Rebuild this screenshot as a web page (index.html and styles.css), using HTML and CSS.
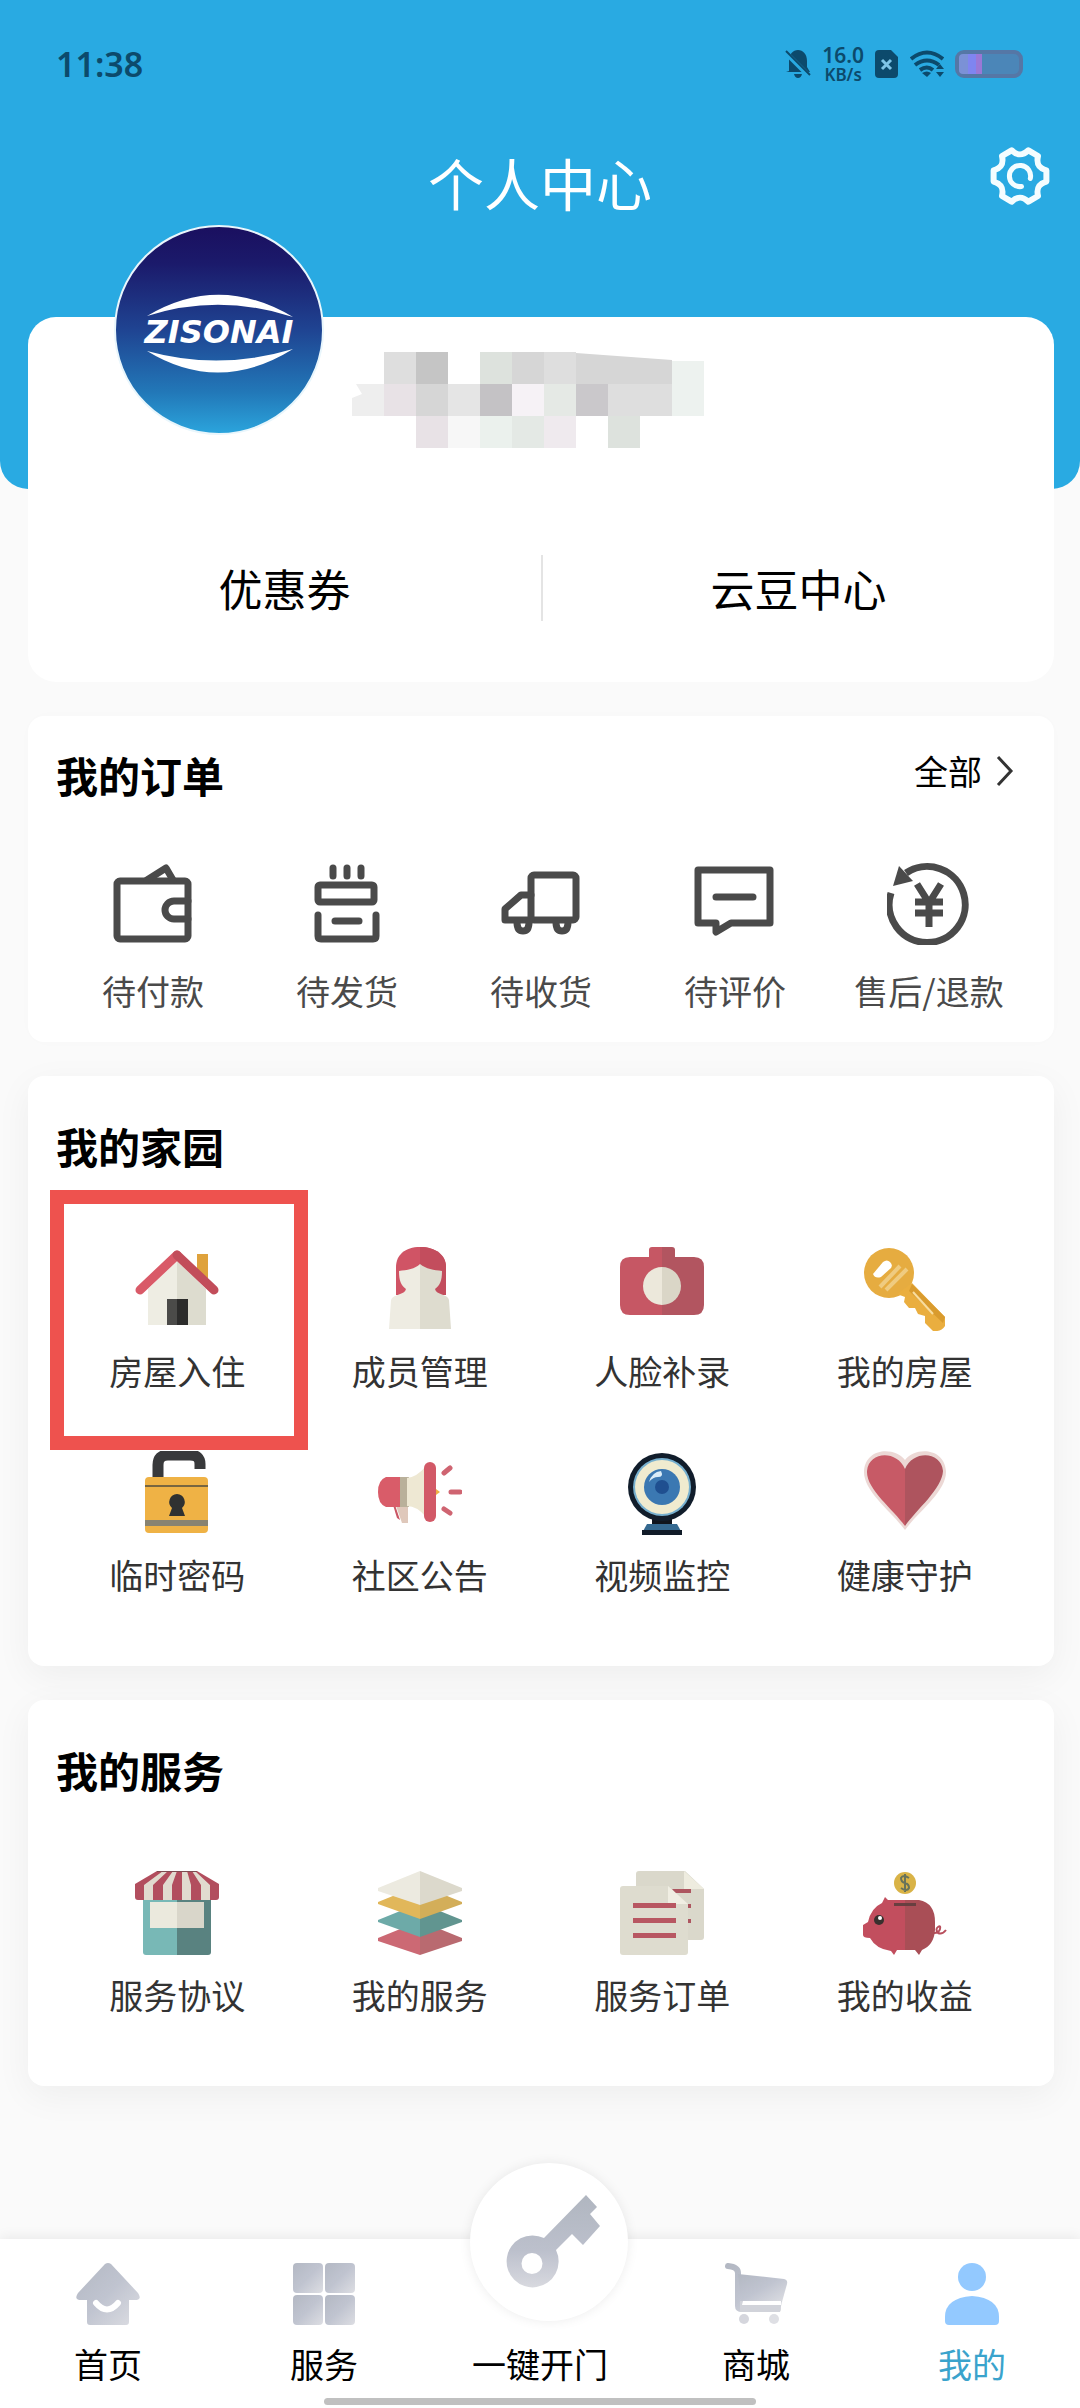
FILE: index.html
```html
<!DOCTYPE html>
<html lang="zh-CN">
<head>
<meta charset="utf-8">
<meta name="viewport" content="width=device-width, initial-scale=1">
<title>个人中心</title>
<link rel="stylesheet" href="styles.css">
</head>
<body>
<div class="page">
  <header class="header">
    <div class="status">
      <time class="clock">11:38</time>
      <div class="status-icons">
        <svg width="26" height="30" viewBox="0 0 26 30"><path d="M4 22V12C4 5 8 1 13 1s9 4 9 11v6l3 5H1zM9 25h8q-1 4-4 4t-4-4z" fill="#0c4a6c"/><path d="M0 3l25 25" stroke="#29aae2" stroke-width="5"/><path d="M1 2l24 24" stroke="#0c4a6c" stroke-width="2"/></svg>
        <div class="speed"><span class="speed-value">16.0</span><span class="speed-unit">KB/s</span></div>
        <svg width="24" height="28" viewBox="0 0 24 28"><path d="M4 0h12l7 7v17q0 4-4 4H4q-4 0-4-4V4q0-4 4-4z" fill="#0c4a6c"/><path d="M7 10l9 9M16 10l-9 9" stroke="#7fc4e6" stroke-width="3"/></svg>
        <svg width="34" height="28" viewBox="0 0 34 28"><g fill="none" stroke="#0c4a6c" stroke-width="4"><path d="M1 9q16-13 32 0"/><path d="M5 15q12-9 24 0"/><path d="M10 20q7-5 13 0"/></g><path d="M12 23q5-3 9 0l-4 4z" fill="#0c4a6c"/><path d="M30 14l4 5h-8zM30 27l4-5h-8z" fill="#0c4a6c"/></svg>
        <svg width="68" height="28" viewBox="0 0 68 28"><rect x="2" y="2" width="64" height="24" rx="7" fill="#4b86b8" stroke="#5577a6" stroke-width="4"/><path d="M8 4h5v20H8q-4 0-4-4V8q0-4 4-4z" fill="#7b91d6"/><path d="M13 4h8v20h-8z" fill="#7f85f0"/><path d="M21 4h6v20h-6z" fill="#9a78d6"/></svg>
      </div>
    </div>
    <div class="titlebar">
      <h1 class="title">个人中心</h1>
      <button class="settings" type="button" aria-label="设置">
        <svg width="64" height="64" viewBox="-32 -32 64 64" fill="none" stroke="#f4fdff" stroke-width="6" stroke-linecap="round" stroke-linejoin="round"><path d="M26.4-5.6V5.6C18.5 8 16.2 12 18 20L8.400 25.700C2.300 20-2.300 20-8.400 25.700L-18 20C-16.200 12-18.500 8-26.400 5.600V-5.600C-18.500-8-16.200-12-18-20L-8.400-25.700C-2.300-20 2.300-20 8.400-25.700L18-20C16.200-12 18.500-8 26.400-5.600Z"/><path d="M10.300 2.500A10.600 10.600 0 1 0 1.500 10.500" stroke-width="5"/></svg>
      </button>
    </div>
  </header>

  <main class="main">
    <section class="card profile">
      <div class="who">
        <svg class="avatar" width="210" height="210" viewBox="0 0 210 210">
          <defs><linearGradient id="sky" x1="0" y1="0" x2="0" y2="1"><stop offset="0" stop-color="#1a0f5f"/><stop offset=".18" stop-color="#1b1a6b"/><stop offset=".5" stop-color="#1f4492"/><stop offset=".8" stop-color="#2278b8"/><stop offset="1" stop-color="#2ba5dd"/></linearGradient></defs>
          <circle cx="105" cy="105" r="104" fill="url(#sky)" stroke="#e9f6fc" stroke-width="2"/>
          <path d="M33 91Q105 48 179 92Q105 68 33 91ZM33 126Q105 146 179 124Q105 170 33 126Z" fill="#fff"/>
          <text x="105" y="118" text-anchor="middle" class="brand">ZISONAI</text>
        </svg>
        <svg class="mask" width="352" height="96" viewBox="0 0 352 96" aria-hidden="true">
          <path d="M32 0h32v32H32z" fill="#dedede"/><path d="M64 0h32v32H64z" fill="#c5c5c5"/><path d="M128 0h32v32h-32z" fill="#dde2dd"/><path d="M160 0h32v32h-32z" fill="#d6d6d6"/><path d="M192 0h32v32h-32z" fill="#dedede"/><path d="M224 1l96 7v24h-96z" fill="#d6d6d6"/><path d="M320 9h32v55h-32z" fill="#edf2ef"/>
          <path d="M4 32h28v32H0V46l10-4z" fill="#eee"/><path d="M32 32h32v32H32z" fill="#e8e2e6"/><path d="M64 32h32v32H64z" fill="#d6d6d6"/><path d="M96 32h32v32H96z" fill="#e5e5e5"/><path d="M128 32h32v32h-32z" fill="#c4c2c5"/><path d="M160 32h32v32h-32z" fill="#f6f2f6"/><path d="M192 32h32v32h-32z" fill="#e5e9e5"/><path d="M224 32h32v32h-32z" fill="#cac8cb"/><path d="M256 32h64v32h-64z" fill="#dedede"/>
          <path d="M64 64h32v32H64z" fill="#e8e2e6"/><path d="M96 64h32v32H96z" fill="#f7f7f7"/><path d="M128 64h32v32h-32z" fill="#ebf1ed"/><path d="M160 64h32v32h-32z" fill="#e4e9e5"/><path d="M192 64h32v32h-32z" fill="#efeaee"/><path d="M256 64h32v32h-32z" fill="#dde2dd"/>
        </svg>
      </div>
      <div class="links">
        <a class="link" href="#coupon">优惠券</a>
        <a class="link" href="#beans">云豆中心</a>
      </div>
    </section>

    <section class="card orders">
      <div class="card-head">
        <h2 class="card-title">我的订单</h2>
        <a class="all" href="#orders">全部<svg width="18" height="32" viewBox="0 0 18 32" fill="none" stroke="#333" stroke-width="3"><path d="M2 2l13 14L2 30"/></svg></a>
      </div>
      <nav class="grid five">
        <a class="item" href="#pay"><svg class="icon line" viewBox="0 0 84 84"><rect x="6" y="20" width="71" height="58" rx="3"/><path d="M36 19L55 7L62 19M77 40H63a9 9 0 0 0 0 18h14"/></svg><span>待付款</span></a>
        <a class="item" href="#ship"><svg class="icon line" viewBox="0 0 84 84"><path d="M28 7v8M42 7v8M56 7v8M13 54v21q0 3 3 3h52q3 0 3-3V54M30 60h24"/><rect x="13" y="24" width="56" height="17" rx="2"/></svg><span>待发货</span></a>
        <a class="item" href="#receive"><svg class="icon line" viewBox="0 0 84 84"><rect x="32" y="14" width="45" height="45" rx="3"/><path d="M32 34H22L6 48V59H32"/><path d="M18 61q0 9 6 9t6-9M57 61q0 9 6 9t6-9"/></svg><span>待收货</span></a>
        <a class="item" href="#review"><svg class="icon line" viewBox="0 0 84 84"><path d="M5 9H77V62H38L23 71V62H5ZM23 36h37"/></svg><span>待评价</span></a>
        <a class="item" href="#refund"><svg class="icon line" viewBox="0 0 84 84"><path d="M4 32A38 38 0 1 0 19 12" stroke-linecap="butt"/><path d="M12 5l14 15-20 5z" fill="#4a4a4a" stroke="none"/><path d="M30 23l12 19 12-19M42 42v24M28 41h28M28 52h28" stroke-linecap="butt"/></svg><span>售后/退款</span></a>
      </nav>
    </section>

    <section class="card">
      <h2 class="card-title">我的家园</h2>
      <nav class="grid four">
        <a class="item marked" href="#checkin"><svg class="icon" viewBox="0 0 84 84"><path d="M62 7h11v26L62 23z" fill="#dfa23c"/><path d="M42 14L13 42v36h29z" fill="#eeede3"/><path d="M42 14l29 28v36H42z" fill="#dddccf"/><path d="M32 52h10v26H32z" fill="#4b4b49"/><path d="M42 52h11v26H42z" fill="#2c2c2b"/><path d="M5 43L42 8" stroke="#d95a68" stroke-width="9" stroke-linecap="round"/><path d="M42 8l37 35" stroke="#c24d5a" stroke-width="9" stroke-linecap="round"/></svg><span>房屋入住</span></a>
        <a class="item" href="#member"><svg class="icon" viewBox="0 0 84 84"><path d="M18 48V20C18 8 27 0 42 0s26 8 26 20v28z" fill="#d05465"/><path d="M42 0c16 0 26 8 26 20v28H42z" fill="#c34d5d"/><path d="M42 17C37 22 29 23 21 24c0 10 2 14 7 18-1 6-13 5-15 11l-2 29h31z" fill="#eeece2"/><path d="M42 17c6 5 14 6 22 7 0 10-2 14-7 18 1 6 13 5 14 11l2 29H42z" fill="#dedccf"/></svg><span>成员管理</span></a>
        <a class="item" href="#face"><svg class="icon" viewBox="0 0 84 84"><path d="M29 10V3q0-3 3-3h10v68H10Q0 68 0 58V20Q0 10 10 10z" fill="#c65764"/><path d="M42 0h10q3 0 3 3v7h19q10 0 10 10v38q0 10-10 10H42z" fill="#b25560"/><path d="M42 20a19 19 0 0 0 0 38z" fill="#ece8db"/><path d="M42 20a19 19 0 0 1 0 38z" fill="#dad6c7"/></svg><span>人脸补录</span></a>
        <a class="item" href="#house"><svg class="icon" viewBox="0 0 84 84"><circle cx="26" cy="26" r="25" fill="#e6ac40"/><path d="M49 36L82 70v9q-4 6-12 5l-8-8v-7l-7-2-3-6h-6l-5-6 1-5-8-3z" fill="#eaae3f"/><path d="M49 37l33 33-2 6-34-32z" fill="#d99b2e"/><path d="M10 27l10-12q4-3 7 0t1 6L18 30q-6 2-8-3z" fill="#fff"/><path d="M17 40l20-21M23 43l21-21" stroke="#efcb80" stroke-width="4"/><path d="M50 45l20 22" stroke="#f8dda0" stroke-width="2"/></svg><span>我的房屋</span></a>
        <a class="item" href="#password"><svg class="icon" viewBox="0 0 84 84"><path d="M23 27V14Q23 4 33 4h22q10 0 10 9v5" fill="none" stroke="#38393b" stroke-width="11"/><rect x="10" y="26" width="63" height="56" rx="4" fill="#efb245"/><path d="M10 35h63" stroke="#776540" stroke-width="2"/><path d="M10 69h63v6H10z" fill="#888371"/><path d="M42 43a8 8 0 0 0-5 14l-3 8h16l-3-8a8 8 0 0 0-5-14z" fill="#2f3131"/></svg><span>临时密码</span></a>
        <a class="item" href="#notice"><svg class="icon" viewBox="0 0 84 84"><path d="M17 52h13v20h-6z" fill="#dfc8bb"/><path d="M17 54l5 15-3-2-4-13z" fill="#ca5765"/><path d="M23 26H8q-8 3-8 15t8 15h15z" fill="#d95c69"/><path d="M22 26h9v30h-9z" fill="#b9b09a"/><path d="M29 27q10-1 19-12v51q-9-11-19-11z" fill="#eee8d3"/><rect x="46" y="11" width="12" height="60" rx="6" fill="#d25967"/><path d="M58 38l4 3-4 3z" fill="#efb245"/><path d="M66 22l6-5M73 41h9M66 58l6 4" stroke="#cf6471" stroke-width="5" stroke-linecap="round"/></svg><span>社区公告</span></a>
        <a class="item" href="#video"><svg class="icon" viewBox="0 0 84 84"><path d="M32 66h20v8H32z" fill="#10151d"/><path d="M22 82l5-9h30l5 9z" fill="#356990"/><path d="M22 79h40v5H22z" fill="#111b28"/><circle cx="42" cy="36" r="34" fill="#111d2b"/><circle cx="42" cy="36" r="29" fill="#77b0cf"/><circle cx="42" cy="36" r="27" fill="#f0ebcf"/><circle cx="42" cy="36" r="18" fill="#3b78b2"/><circle cx="42" cy="36" r="7" fill="#1f4f90"/><path d="M29 31q3-10 12-11 3 6-3 6-5 0-9 5z" fill="#d9ecf8"/></svg><span>视频监控</span></a>
        <a class="item" href="#health"><svg class="icon" viewBox="0 0 84 84"><path d="M42 79C28 60 0 40 1 20 3-4 32-4 42 9 52-4 81-4 83 20 84 40 56 60 42 79Z" fill="#ecd8d5"/><path d="M42 75C30 58 3 38 4 20 6 0 34-1 42 18z" fill="#c75a66"/><path d="M42 75C54 58 79 38 80 20 78 0 50-1 42 18z" fill="#ae545e"/></svg><span>健康守护</span></a>
      </nav>
    </section>

    <section class="card">
      <h2 class="card-title">我的服务</h2>
      <nav class="grid four">
        <a class="item" href="#agreement"><svg class="icon" viewBox="0 0 84 84"><path d="M8 26h34v58H11q-3 0-3-3z" fill="#78b8b6"/><path d="M42 26h34v55q0 3-3 3H42z" fill="#598280"/><path d="M15 31h27v26H15z" fill="#ebe9dd"/><path d="M42 31h27v26H42z" fill="#d9d6ca"/><path d="M22 0h40l22 13v13q0 3-3 3H3q-3 0-3-3V13z" fill="#b24e5e"/><path d="M28 0h5L18 14v15H9V14zM38 0h4l-5 14v15h-9V14zM47 0h5l4 14v15h-9V14zM57 0h3l15 14v15h-9V14z" fill="#e1dbcf"/><path d="M22 0h40" stroke="#7e4c51" stroke-width="2"/></svg><span>服务协议</span></a>
        <a class="item" href="#services"><svg class="icon" viewBox="0 0 84 84"><path d="M0 67l42-17v34L0 70z" fill="#cc6974"/><path d="M84 67L42 50v34l42-14z" fill="#b96a70"/><path d="M0 49l42-17v34L0 51z" fill="#6daaa8"/><path d="M84 49L42 32v34l42-15z" fill="#619590"/><path d="M0 31l42-17v34L0 33z" fill="#e1b75a"/><path d="M84 31L42 14v34l42-15z" fill="#d3ae59"/><path d="M42 0v34L0 20v-3z" fill="#eceae0"/><path d="M42 0v34l42-14v-3z" fill="#dcd9cc"/></svg><span>我的服务</span></a>
        <a class="item" href="#service-orders"><svg class="icon" viewBox="0 0 84 84"><path d="M19 0h46l19 18v48q0 3-3 3H16V3q0-3 3-3z" fill="#dad8cb"/><path d="M64 0l20 18H64z" fill="#eeecdf"/><path d="M52 18h19v4H55zM68 33h3v4h-3zM68 48h3v4h-3z" fill="#ad5660"/><path d="M3 15h45l20 18v48q0 3-3 3H3q-3 0-3-3V18q0-3 3-3z" fill="#dedccf"/><path d="M48 15l20 18H48z" fill="#f0eee3"/><path d="M13 32h43v5H13zM13 47h43v5H13zM13 62h43v5H13z" fill="#b85762"/></svg><span>服务订单</span></a>
        <a class="item" href="#income"><svg class="icon" viewBox="0 0 84 84"><circle cx="42" cy="12" r="11" fill="#d9b347"/><path d="M46 7q-6-4-8 0 0 4 4 5t4 5q-2 4-8 0M42 3v18" fill="none" stroke="#68735a" stroke-width="2"/><path d="M71 62q5 0 6-4t-2-2 0 6q4 2 8-3" fill="none" stroke="#b84e5c" stroke-width="2"/><path d="M42 29H25l-3-3-3 6Q8 37 5 51l-5 3v10q0 3 7 3 6 11 21 13l3 4 3-5h8z" fill="#c24e5e"/><path d="M42 29h14q16 3 16 22v8q-1 15-13 20l-3 5-4-5H42z" fill="#a94e56"/><path d="M31 32h22v3H31z" fill="#683f40"/><circle cx="16" cy="49" r="5" fill="#38302e"/><circle cx="17" cy="47" r="2" fill="#fff"/></svg><span>我的收益</span></a>
      </nav>
    </section>
  </main>

  <nav class="tabbar">
    <a class="tab" href="#home"><svg width="64" height="62" viewBox="0 0 64 62"><defs><linearGradient id="grey" x1="0" y1="0" x2="1" y2="1"><stop offset="0" stop-color="#b3b8c3"/><stop offset=".5" stop-color="#c0c4d0"/><stop offset="1" stop-color="#dddee3"/></linearGradient></defs><path d="M29 1q3-2 6 0l27 29q4 6-1 7h-8v22q0 3-3 3H14q-3 0-3-3V37H3q-5-1-1-7z" fill="url(#grey)"/><path d="M20 40q11 13 22 0" fill="none" stroke="#fff" stroke-width="6" stroke-linecap="round"/></svg><span>首页</span></a>
    <a class="tab" href="#service"><svg width="64" height="62" viewBox="0 0 64 62" fill="url(#grey)"><rect x="1" width="30" height="30" rx="4"/><rect x="33" width="30" height="30" rx="4"/><rect x="1" y="32" width="30" height="30" rx="4"/><rect x="33" y="32" width="30" height="30" rx="4"/></svg><span>服务</span></a>
    <a class="tab" href="#open"><span class="knob"><svg width="158" height="158" viewBox="0 0 158 158"><defs><linearGradient id="steel" x1="0" y1="0" x2="0" y2="1"><stop offset="0" stop-color="#b0b6c0"/><stop offset=".6" stop-color="#bcc0cc"/><stop offset="1" stop-color="#d8d9df"/></linearGradient></defs><path d="M74 75l42-43 11 12-7 7 10 12-17 19-11-11-16 16A26 26 0 1 1 74 75zM62 90a10 10 0 1 0 0 21 10 10 0 0 0 0-21z" fill="url(#steel)" fill-rule="evenodd"/></svg></span><span>一键开门</span></a>
    <a class="tab" href="#mall"><svg width="64" height="62" viewBox="0 0 64 62"><path d="M4 3q10 1 10 7v33q0 3 4 3h36" fill="none" stroke="url(#grey)" stroke-width="6" stroke-linecap="round"/><path d="M14 11l46 5q4 1 3 5l-5 18H17z" fill="url(#grey)"/><path d="M16 38h42l-2 11H16z" fill="#d1d3da"/><path d="M19 38h38v4H18z" fill="#fff"/><circle cx="20" cy="56" r="5" fill="#d5d6dd"/><circle cx="50" cy="56" r="5" fill="#dedfe4"/></svg><span>商城</span></a>
    <a class="tab active" href="#mine" aria-current="page"><svg width="64" height="62" viewBox="0 0 64 62" fill="#93c9ff"><circle cx="32" cy="14" r="14"/><path d="M5 58v-4q0-19 27-21 27 2 27 21v4q0 4-4 4H9q-4 0-4-4z"/></svg><span>我的</span></a>
    <div class="gesture"></div>
  </nav>
</div>
</body>
</html>
```

FILE: styles.css
```css
* { box-sizing: border-box; }

body {
  margin: 0;
  background: #fafafa;
  color: #000;
  font-family: "Noto Sans CJK SC", sans-serif;
}

h1, h2 { margin: 0; }
a { color: inherit; text-decoration: none; }
svg { display: block; flex: none; }

.page {
  display: flex;
  flex-direction: column;
  min-height: 100vh;
}

/* blue header */
.header {
  height: 489px;
  background: #29aae2;
  border-radius: 0 0 28px 28px;
}

.status {
  display: flex;
  justify-content: space-between;
  align-items: center;
  height: 88px;
  padding: 40px 57px 0 56px;
  color: #0c4a6c;
  font-family: "Noto Sans", sans-serif;
  font-weight: 600;
}

.clock { font-size: 34px; line-height: 48px; }
.status-icons { display: flex; align-items: center; gap: 11px; }
.speed { display: flex; flex-direction: column; align-items: center; }
.speed-value { font-size: 21px; line-height: 22px; }
.speed-unit { font-size: 17px; line-height: 18px; }

.titlebar {
  display: grid;
  grid-template-columns: 64px 1fr 64px;
  align-items: center;
  padding: 52px 28px 0;
}

.title {
  grid-column: 2;
  color: #fff;
  text-align: center;
  font-size: 56px;
  font-weight: 400;
  line-height: 84px;
}

.settings { width: 64px; height: 64px; margin-bottom: 12px; padding: 0; border: 0; background: none; }

/* cards */
.main {
  flex: 1;
  display: flex;
  flex-direction: column;
  gap: 34px;
  margin-top: -172px;
  padding: 0 26px 0 28px;
}

.card {
  padding: 42px 28px 67px;
  background: #fff;
  border-radius: 16px;
  box-shadow: 0 10px 36px rgba(0, 0, 0, .05);
}

.card-title { font-size: 42px; line-height: 56px; font-weight: 700; }

.profile { padding: 0 0 61px; border-radius: 28px; box-shadow: none; }
.who { display: flex; align-items: flex-start; height: 131px; padding-left: 86px; gap: 28px; }
.avatar { margin-top: -92px; }
.mask { margin-top: 35px; }
.brand { fill: #fff; font: italic 700 32px "DejaVu Sans", sans-serif; }

.links { display: grid; grid-template-columns: 1fr 1fr; padding-top: 107px; }
.link { text-align: center; font-size: 44px; line-height: 66px; }
.link + .link { border-left: 2px solid #e4e4e4; }

.orders { padding: 31px 28px 27px; box-shadow: 0 0 20px rgba(0, 0, 0, .01); }
.card-head { display: flex; justify-content: space-between; align-items: flex-start; }
.all { display: flex; align-items: center; gap: 14px; padding-right: 12px; font-size: 34px; line-height: 48px; }

.grid { display: grid; color: #333; font-size: 34px; line-height: 48px; }
.five { grid-template-columns: repeat(5, 1fr); margin-top: 58px; }
.four { grid-template-columns: repeat(4, 1fr); row-gap: 56px; margin-top: 73px; }
.item { position: relative; display: flex; flex-direction: column; align-items: center; gap: 16px; white-space: nowrap; }
.five .item { gap: 22px; color: #4a4a4a; }
.icon { width: 84px; height: 84px; }
.line { fill: none; stroke: #4a4a4a; stroke-width: 7; stroke-linecap: round; stroke-linejoin: round; }

.marked::after {
  content: "";
  position: absolute;
  inset: -57px -9px -55px -6px;
  border: 14px solid #ee524e;
}

/* bottom tabs */
.tabbar {
  position: relative;
  display: grid;
  grid-template-columns: repeat(5, 1fr);
  padding: 24px 0 20px;
  background: #fff;
  box-shadow: 0 -2px 12px rgba(0, 0, 0, .07);
}

.tab {
  position: relative;
  display: flex;
  flex-direction: column;
  align-items: center;
  justify-content: flex-end;
  gap: 15px;
  font-size: 34px;
  line-height: 48px;
}

.active { color: #3aa3cc; }

.knob {
  position: absolute;
  top: -100px;
  left: 38px;
  border-radius: 50%;
  background: #fff;
  box-shadow: 0 0 12px rgba(0, 0, 0, .08);
}

.gesture {
  position: absolute;
  left: 30%;
  right: 30%;
  bottom: 3px;
  height: 7px;
  border-radius: 4px;
  background: #c0c0c0;
}
```
